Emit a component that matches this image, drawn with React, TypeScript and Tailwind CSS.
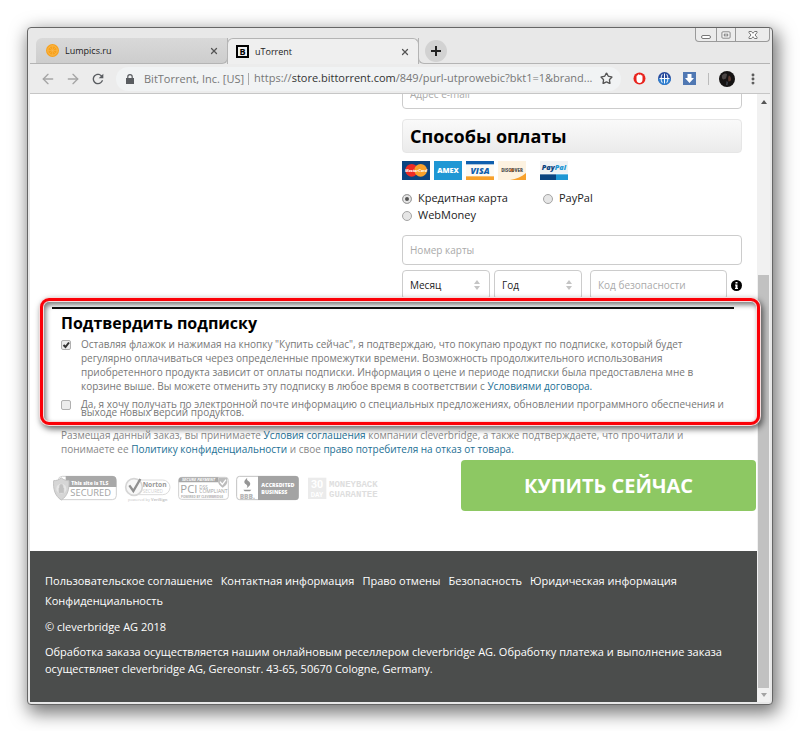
import { ReactNode, useState } from "react";
import { ArrowLeft, ArrowRight, MoreVertical, Star, X } from "lucide-react";

const footerLinks = [
  "Пользовательское соглашение",
  "Контактная информация",
  "Право отмены",
  "Безопасность",
  "Юридическая информация",
  "Конфиденциальность",
];

function OrangeIcon() {
  return (
    <svg viewBox="0 0 26 26" className="size-[13px] shrink-0">
      <circle cx="13" cy="13" r="13" fill="#f7a11c" />
      <circle cx="13" cy="13" r="9.5" fill="none" stroke="#fbc060" strokeWidth="1.5" />
      <path
        d="M13 4v18M4 13h18M6.6 6.6l12.8 12.8M19.4 6.6L6.6 19.4"
        stroke="#fbb850"
        strokeWidth="1"
      />
    </svg>
  );
}

function WindowControls() {
  return (
    <div className="flex h-[14px] rounded-b-sm border border-t-0 border-[#9a9a9a] bg-[#ececec] text-[#777]">
      <button aria-label="Свернуть" className="flex w-5 items-center justify-center">
        <svg viewBox="0 0 20 12" className="h-3 w-5" fill="#fff" stroke="currentColor">
          <rect x="5.5" y="6.5" width="9" height="3" rx="1.5" />
        </svg>
      </button>
      <button
        aria-label="Развернуть"
        className="flex w-5 items-center justify-center border-x border-[#9a9a9a]"
      >
        <svg viewBox="0 0 20 12" className="h-3 w-5" fill="#fff" stroke="currentColor">
          <rect x="5.5" y="2.5" width="9" height="7" rx="1" />
          <rect x="8" y="5" width="4" height="2" />
        </svg>
      </button>
      <button aria-label="Закрыть" className="flex w-[33px] items-center justify-center">
        <svg viewBox="0 0 20 12" className="h-3 w-5" fill="#fff" stroke="currentColor">
          <path d="M6 2.500h2.500l1.500 1.800 1.500-1.800H14v1.200L12 6l2 2.300v1.200h-2.500L10 7.700 8.500 9.500H6V8.300L8 6 6 3.700z" />
        </svg>
      </button>
    </div>
  );
}

function TabStrip() {
  return (
    <div className="flex h-9 items-end">
      <div className="w-[6px] self-stretch border-b border-[#b4b4b4]" />
      <div className="flex h-[26px] w-[192px] items-center rounded-tl-md rounded-br-md border-r border-b border-[#b4b4b4] bg-linear-to-b from-[#d9d9d9] to-[#cdcdcd] pr-2 pl-[10px]">
        <OrangeIcon />
        <span className="ml-[6px] flex-1 text-[9px] text-[#222]">Lumpics.ru</span>
        <button aria-label="Закрыть вкладку">
          <X className="size-[10px] text-[#555]" strokeWidth={3} />
        </button>
      </div>
      <div className="-ml-px flex h-[26px] w-[192px] items-center rounded-t-md border border-b-0 border-[#b4b4b4] bg-[#efefef] pr-2 pl-2">
        <span className="flex size-[13px] items-center justify-center border-2 border-black text-[9px] leading-none font-bold">
          B
        </span>
        <span className="ml-[6px] flex-1 text-[9px] text-[#222]">uTorrent</span>
        <button aria-label="Закрыть вкладку">
          <X className="size-[10px] text-[#555]" strokeWidth={3} />
        </button>
      </div>
      <div className="-ml-px flex h-[26px] flex-1 items-center rounded-bl-md border-b border-l border-[#b4b4b4] pl-[6px]">
        <button
          aria-label="Новая вкладка"
          className="flex size-[22px] items-center justify-center rounded-full bg-[#d2d2d2]"
        >
          <svg viewBox="0 0 10 10" className="size-[10px]" stroke="#222" strokeWidth="2">
            <path d="M5 0v10M0 5h10" />
          </svg>
        </button>
      </div>
      <div className="flex self-stretch border-b border-[#b4b4b4]">
        <WindowControls />
      </div>
    </div>
  );
}

function Toolbar() {
  return (
    <div className="flex h-[30px] items-center border-b border-[#c6c6c6] bg-[#ececec]">
      <button aria-label="Назад" className="ml-[10px]">
        <ArrowLeft className="size-4 text-[#a5a5a5]" />
      </button>
      <button aria-label="Вперед" className="ml-[9px]">
        <ArrowRight className="size-4 text-[#a5a5a5]" />
      </button>
      <button aria-label="Обновить" className="ml-[9px]">
        <svg viewBox="0 0 24 24" className="size-4" fill="#5a5d61">
          <path d="M17.650 6.350C16.200 4.900 14.210 4 12 4c-4.420 0-7.990 3.580-7.990 8s3.570 8 7.990 8c3.730 0 6.840-2.550 7.730-6h-2.080c-.82 2.330-3.040 4-5.650 4-3.310 0-6-2.690-6-6s2.690-6 6-6c1.660 0 3.140.69 4.220 1.780L13 11h7V4l-2.350 2.350z" />
        </svg>
      </button>
      <div className="ml-[10px] flex h-6 min-w-0 flex-1 items-center rounded-full bg-[#f1f3f4] pr-2 pl-[10px] text-[11px] whitespace-nowrap text-[#777]">
        <svg viewBox="0 0 8 10" className="h-[10px] w-2" fill="#5a5d61">
          <path d="M0 4h8v6H0z" />
          <path d="M1.800 4.500V2.800a2.200 2.200 0 0 1 4.400 0v1.700" fill="none" stroke="#5a5d61" strokeWidth="1.200" />
        </svg>
        <span className="ml-[10px] border-r border-[#aaa] pr-1 leading-3">BitTorrent, Inc. [US]</span>
        <span className="flex-1 pl-[5px]">
          https://<span className="text-[#333]">store.bittorrent.com</span>
          /849/purl-utprowebic?bkt1=1&amp;brand...
        </span>
        <button aria-label="Добавить в закладки">
          <Star className="size-[13px] text-[#555]" strokeWidth={2.5} />
        </button>
      </div>
      <div className="flex items-center pl-3">
        <button aria-label="Блокировщик рекламы">
          <svg viewBox="0 0 26 26" className="size-[13px]">
            <circle cx="13" cy="13" r="12" fill="#e8231d" />
            <path
              d="M7 10c0-3 2-4 3-3 0-3 2-3 3-1 1-2 3-1 3 1 2-1 3 0 3 3v5c0 4-2 7-6 7s-6-3-6-7z"
              fill="#fff"
            />
          </svg>
        </button>
        <button aria-label="VPN" className="ml-3">
          <svg viewBox="0 0 26 26" className="size-[13px]">
            <circle cx="13" cy="13" r="13" fill="#274a9c" />
            <path d="M13 26a13 13 0 0 0 13-13H0a13 13 0 0 0 13 13z" fill="#2f7fcf" />
            <path
              d="M13 3v20M3 13h20M8.500 4.500c-3 5-3 12 0 17M17.500 4.500c3 5 3 12 0 17"
              stroke="#fff"
              strokeWidth="2"
              fill="none"
            />
          </svg>
        </button>
        <button aria-label="Загрузки" className="ml-3">
          <svg viewBox="0 0 26 26" className="size-[13px]">
            <path d="M0 0h26v26H0z" fill="#5078b3" />
            <path d="M9 4h8v8h5l-9 10-9-10h5z" fill="#fff" />
          </svg>
        </button>
        <div className="ml-3 h-3 w-px bg-[#bbb]" />
        <button aria-label="Профиль" className="ml-[10px]">
          <svg viewBox="0 0 32 32" className="size-4">
            <circle cx="16" cy="16" r="16" fill="#151313" />
            <path d="M6 9c4-5 9-5 10-2l-2 8-5 2c-3-1-4-5-3-8z" fill="#4a4545" />
            <path d="M20 9c4 2 5 7 3 11l-4 1c-1-4-1-9 1-12z" fill="#5b3a30" />
            <path d="M15 20l3 2-1 7-3-1z" fill="#3b3f47" />
          </svg>
        </button>
        <button aria-label="Меню" className="mr-[10px] ml-[11px]">
          <MoreVertical className="size-[14px] text-[#555]" strokeWidth={3} />
        </button>
      </div>
    </div>
  );
}

function CardLogos() {
  return (
    <div className="mt-2 flex gap-1">
      <svg viewBox="0 0 84 57" className="h-[19px] w-7" role="img" aria-label="MasterCard">
        <path d="M0 0h84v57H0z" fill="#0b4480" />
        <circle cx="29" cy="28" r="19" fill="#ee2b24" />
        <circle cx="56" cy="28" r="19" fill="#f8a12b" />
        <text x="42" y="33" fontSize="12" fontWeight="700" fontStyle="italic" fill="#fff" textAnchor="middle">
          MasterCard
        </text>
      </svg>
      <svg viewBox="0 0 84 57" className="h-[19px] w-7">
        <path d="M0 0h84v57H0z" fill="#1f97d4" />
        <text x="42" y="36" fontSize="22" fontWeight="800" fill="#fff" textAnchor="middle">
          AMEX
        </text>
      </svg>
      <svg viewBox="0 0 84 57" className="h-[19px] w-7">
        <path d="M0 0h84v57H0z" fill="#fdfaf4" />
        <path d="M0 0h84v10H0z" fill="#0f5fae" />
        <path d="M0 46h84v11H0z" fill="#f8a12b" />
        <text x="42" y="38" fontSize="26" fontWeight="800" fontStyle="italic" fill="#0f5fae" textAnchor="middle">
          VISA
        </text>
      </svg>
      <svg viewBox="0 0 84 57" className="h-[19px] w-7">
        <path d="M0 0h84v57H0z" fill="#fdf2e0" />
        <path d="M84 36v21H36c20-3 36-10 48-21z" fill="#f8a12b" />
        <circle cx="42" cy="28" r="6" fill="#f58220" />
        <text x="42" y="33" fontSize="13" fontWeight="800" fill="#555" textAnchor="middle">
          DISCOVER
        </text>
      </svg>
      <svg viewBox="0 0 84 57" className="ml-[10px] h-[19px] w-7">
        <path d="M0 0h84v38H0z" fill="#f0f2f4" />
        <path d="M0 40h48v17H0z" fill="#0b4480" />
        <path d="M48 40h36v17H48z" fill="#1f97d4" />
        <text x="42" y="28" fontSize="22" fontWeight="800" fontStyle="italic" fill="#0b4480" textAnchor="middle">
          Pay<tspan fill="#1f97d4">Pal</tspan>
        </text>
      </svg>
    </div>
  );
}

function PaymentRadio({
  label,
  checked,
  onChange,
}: {
  label: string;
  checked: boolean;
  onChange: () => void;
}) {
  return (
    <label className="flex h-[17px] items-center text-[11px] text-[#222]">
      <input
        type="radio"
        name="payment"
        checked={checked}
        onChange={onChange}
        className="mr-[6px] size-[10px] appearance-none rounded-full border border-[#a5a5a5] bg-[#e6e6e6] checked:bg-[#555] checked:shadow-[inset_0_0_0_2px_#e6e6e6]"
      />
      {label}
    </label>
  );
}

function SelectBox({ label }: { label: string }) {
  return (
    <div className="relative h-[30px] w-22">
      <select
        aria-label={label}
        className="size-full appearance-none rounded border border-[#ccc] bg-white px-[7px] text-[10px] text-[#222]"
      >
        <option>{label}</option>
      </select>
      <svg viewBox="0 0 6 10" className="absolute top-[10px] right-[10px] h-[10px] w-[6px]" fill="#c4c4c4">
        <path d="M0 4l3-4 3 4zM0 6l3 4 3-4z" />
      </svg>
    </div>
  );
}

function PaymentForm() {
  const [payment, setPayment] = useState("card");

  return (
    <form className="mr-[15px] ml-auto w-[340px]">
      {/* the page is scrolled, so only the lower half of this field is in view */}
      <div className="flex h-[15px] items-end overflow-hidden">
        <input
          aria-label="Адрес e-mail"
          placeholder="Адрес e-mail"
          className="h-[30px] w-full shrink-0 rounded border border-[#ccc] px-[7px] text-[10px] placeholder:text-[#aaa]"
        />
      </div>
      <h2 className="mt-[10px] flex h-[34px] items-center rounded border border-[#e6e6e6] bg-linear-to-b from-[#fafafa] to-[#ebebeb] px-[7px] text-[18px] font-bold text-black">
        Способы оплаты
      </h2>
      <CardLogos />
      <div className="mt-[10px] grid grid-cols-[141px_1fr]">
        <PaymentRadio label="Кредитная карта" checked={payment === "card"} onChange={() => setPayment("card")} />
        <PaymentRadio label="PayPal" checked={payment === "paypal"} onChange={() => setPayment("paypal")} />
        <PaymentRadio label="WebMoney" checked={payment === "wm"} onChange={() => setPayment("wm")} />
      </div>
      <input
        aria-label="Номер карты"
        placeholder="Номер карты"
        className="mt-[11px] h-[30px] w-full rounded border border-[#ccc] px-[7px] text-[10px] placeholder:text-[#aaa]"
      />
      <div className="mt-[5px] flex items-center">
        <SelectBox label="Месяц" />
        <div className="w-1" />
        <SelectBox label="Год" />
        <input
          aria-label="Код безопасности"
          placeholder="Код безопасности"
          className="ml-2 h-[30px] min-w-0 flex-1 rounded border border-[#ccc] px-[7px] text-[10px] placeholder:text-[#aaa]"
        />
        <svg viewBox="0 0 22 22" className="ml-1 size-[11px]">
          <circle cx="11" cy="11" r="11" fill="#000" />
          <path d="M9 4h4v3H9zM8 9h5v7h1v2H8v-2h1v-5H8z" fill="#fff" />
        </svg>
      </div>
    </form>
  );
}

function Checkbox({ id, defaultChecked }: { id: string; defaultChecked?: boolean }) {
  return (
    <span className="relative mt-[3px] size-[10px] shrink-0">
      <input
        id={id}
        type="checkbox"
        defaultChecked={defaultChecked}
        className="peer block size-[10px] appearance-none rounded-xs border border-[#b0b0b0] bg-[#ececec]"
      />
      <svg
        viewBox="0 0 10 10"
        className="pointer-events-none absolute inset-0 hidden size-[10px] peer-checked:block"
        fill="none"
        stroke="#333"
        strokeWidth="2"
      >
        <path d="M2.500 5l2 2L8 2.500" />
      </svg>
    </span>
  );
}

function TextLink({ children }: { children: ReactNode }) {
  return (
    <a href="#" className="text-[#1c6f94]">
      {children}
    </a>
  );
}

function ConfirmSubscription() {
  return (
    <section className="relative z-10 mt-[7px] mr-[23px] ml-[22px]">
      <div className="h-[2px] bg-[#111]" />
      <div className="pr-2 pl-[9px]">
        <h2 className="pt-1 text-[16px] leading-5 font-bold text-black">Подтвердить подписку</h2>
        <div className="mt-1 flex gap-[10px]">
          <Checkbox id="agree" defaultChecked />
          <label htmlFor="agree" className="text-[10px] leading-[14px] whitespace-nowrap text-[#777]">
            Оставляя флажок и нажимая на кнопку "Купить сейчас", я подтверждаю, что покупаю продукт по подписке, который будет
            <br />
            регулярно оплачиваться через определенные промежутки времени. Возможность продолжительного использования
            <br />
            приобретенного продукта зависит от оплаты подписки. Информация о цене и периоде подписки была предоставлена мне в
            <br />
            корзине выше. Вы можете отменить эту подписку в любое время в соответствии с{" "}
            <TextLink>Условиями договора.</TextLink>
          </label>
        </div>
        <div className="mt-1 flex gap-[10px]">
          <Checkbox id="news" />
          <label htmlFor="news" className="pt-[3px] text-[10px] leading-2 whitespace-nowrap text-[#777]">
            Да, я хочу получать по электронной почте информацию о специальных предложениях, обновлении программного обеспечения и
            <br />
            выходе новых версий продуктов.
          </label>
        </div>
      </div>
      <div className="pointer-events-none absolute -top-[9px] -right-[26px] -bottom-[9px] -left-3 rounded-[9px] border-3 border-[#fb0007] shadow-[0_0_0_1px_#f6dcdc,2px_3px_6px_1px_rgba(0,0,0,0.6),inset_0_0_0_1px_#f6dcdc,inset_2px_3px_5px_1px_rgba(0,0,0,0.5)]" />
    </section>
  );
}

function TrustBadges() {
  return (
    <div className="flex gap-[7px] pt-[15px]">
      <svg viewBox="38 45 192 81" className="h-[27px] w-16">
        <rect x="54" y="49" width="174" height="70" rx="12" fill="#fff" stroke="#d0d0d0" strokeWidth="3" />
        <path d="M76 48h140q12 0 12 12v21H76z" fill="#a8a8a8" />
        <path d="M63 54c7 6 15 8 23 8 1 26-4 46-23 58-19-12-25-32-23-58 8 0 16-2 23-8z" fill="#d6d6d6" stroke="#c2c2c2" strokeWidth="3" />
        <circle cx="63" cy="86" r="15" fill="#e6e6e6" />
        <path d="M56 84h14v14H56zM58 84v-6a5 5 0 0 1 10 0v6" fill="#c2c2c2" stroke="#c2c2c2" strokeWidth="2" />
        <text x="93" y="74" fontSize="15" fontWeight="800" fill="#fff">This site is TLS</text>
        <text x="90" y="109" fontSize="28" fontWeight="500" fill="#a3a3a3">SECURED</text>
      </svg>
      <svg viewBox="250 45 141 81" className="h-[27px] w-[47px]">
        <rect x="258" y="60" width="130" height="44" rx="22" fill="#fff" stroke="#dcdcdc" strokeWidth="3" />
        <circle cx="280" cy="81" r="25" fill="#f7f7f7" stroke="#d6d6d6" strokeWidth="5" />
        <path d="M266 76l12 17 21-36" fill="none" stroke="#909090" strokeWidth="7" />
        <text x="306" y="81" fontSize="20" fontWeight="700" fill="#999">Norton</text>
        <text x="306" y="98" fontSize="14" fill="#cfcfcf">SECURED</text>
        <text x="262" y="122" fontSize="12" fill="#c6c6c6">powered by <tspan fontWeight="700">VeriSign</tspan></text>
      </svg>
      <svg viewBox="0 0 153 81" className="h-[27px] w-[51px]">
        <rect x="2" y="7" width="149" height="66" rx="9" fill="#fff" stroke="#d0d0d0" strokeWidth="3" />
        <path d="M2 22V16q0-9 9-9h110v15z" fill="#a8a8a8" />
        <path d="M122 8h26v10c0 12-8 16-14 20-8-5-14-12-14-20z" fill="#bcbcbc" />
        <path d="M126 20l7 8 11-14" fill="none" stroke="#fff" strokeWidth="4" />
        <text x="12" y="19" fontSize="12" fontWeight="700" fontStyle="italic" fill="#fff">SECURE PAYMENT</text>
        <text x="7" y="54" fontSize="34" fontWeight="500" fill="#a3a3a3">PCI</text>
        <text x="64" y="41" fontSize="14" fill="#a3a3a3">DSS</text>
        <text x="64" y="55" fontSize="15" fill="#a3a3a3">COMPLIANT</text>
        <text x="9" y="69" fontSize="9" fontWeight="700" fill="#b0b0b0">POWERED BY CLEVERBRIDGE</text>
      </svg>
      <svg viewBox="0 0 189 81" className="h-[27px] w-[63px]">
        <rect x="2" y="4" width="185" height="70" rx="9" fill="#fff" stroke="#c2c2c2" strokeWidth="3" />
        <path d="M66 3h113q9 0 9 9v54q0 9-9 9H66z" fill="#a3a3a3" />
        <path d="M34 8c-10 8-12 14-4 20 5 4 5 7 2 12 12-8 14-14 6-21-5-4-6-6-4-11zM22 44h24l-4 5H26z" fill="#969696" />
        <text x="34" y="71" fontSize="20" fontWeight="800" fill="#b8b8b8" textAnchor="middle">BBB.</text>
        <text x="76" y="36" fontSize="16" fontWeight="800" fill="#fff">ACCREDITED</text>
        <text x="76" y="56" fontSize="16" fontWeight="800" fill="#fff">BUSINESS</text>
      </svg>
      <svg viewBox="-6 0 219 81" className="h-[27px] w-[73px]">
        <path d="M0 8h55v64H0z" fill="#ebebeb" />
        <g fontFamily="Roboto, sans-serif" fontWeight="700" fill="#fff" textAnchor="middle">
          <text x="27" y="38" fontSize="32">30</text>
          <text x="27" y="66" fontSize="20">DAY</text>
        </g>
        <g fontFamily="Liberation Mono, monospace" fontSize="27" fontWeight="700" fill="#dedede">
          <text x="63" y="35">MONEYBACK</text>
          <text x="63" y="67">GUARANTEE</text>
        </g>
      </svg>
    </div>
  );
}

function Footer() {
  return (
    <footer className="mt-10 bg-[#4b4d4c] px-[15px] pt-5 pb-[25px] text-[11px] text-white">
      <nav className="flex flex-wrap gap-x-2">
        {footerLinks.map((link) => (
          <a key={link} href="#" className="leading-5">
            {link}
          </a>
        ))}
      </nav>
      <p className="mt-[7px] leading-[17px]">© cleverbridge AG 2018</p>
      <p className="mt-2 leading-[17px]">
        Обработка заказа осуществляется нашим онлайновым реселлером cleverbridge AG. Обработку платежа и выполнение заказа
        <br />
        осуществляет cleverbridge AG, Gereonstr. 43-65, 50670 Cologne, Germany.
      </p>
    </footer>
  );
}

function Scrollbar() {
  return (
    <div className="flex w-[13px] flex-col items-center bg-[#f1f1f1]">
      <svg viewBox="0 0 6 4" className="mt-[6px] h-1 w-[6px]" fill="#555">
        <path d="M0 4l3-4 3 4z" />
      </svg>
      <div className="mt-[171px] w-[11px] flex-1 bg-[#c1c1c1]" />
      <svg viewBox="0 0 6 4" className="my-[5px] h-1 w-[6px]" fill="#a3a3a3">
        <path d="M0 0l3 4 3-4z" />
      </svg>
    </div>
  );
}

export default function App() {
  return (
    <div className="bg-white p-[27px] font-['Open_Sans',sans-serif]">
      <div className="rounded-[4px] border border-[#666] bg-[#e8e8e8] px-[2px] pb-[2px] shadow-[3px_6px_18px_2px_rgba(0,0,0,0.55)]">
        <TabStrip />
        <Toolbar />
        <div className="flex">
          <main className="min-w-0 flex-1 bg-white">
            <PaymentForm />
            <ConfirmSubscription />
            <p className="mt-3 px-[31px] text-[10px] leading-[14px] whitespace-nowrap text-[#888]">
              Размещая данный заказ, вы принимаете <TextLink>Условия соглашения</TextLink> компании cleverbridge, а также
              подтверждаете, что прочитали и
              <br />
              понимаете ее <TextLink>Политику конфиденциальности</TextLink> и свое{" "}
              <TextLink>право потребителя на отказ от товара.</TextLink>
            </p>
            <div className="mt-1 flex justify-between pr-px pl-[23px]">
              <TrustBadges />
              <button className="h-[51px] w-[295px] rounded-sm bg-[#8dc863] text-[20px] font-bold text-white">
                КУПИТЬ СЕЙЧАС
              </button>
            </div>
            <Footer />
          </main>
          <Scrollbar />
        </div>
      </div>
    </div>
  );
}
